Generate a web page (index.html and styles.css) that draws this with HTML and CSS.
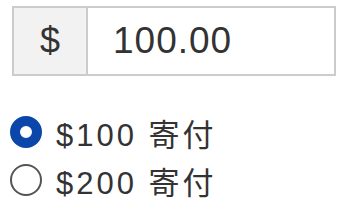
FILE: index.html
```html
<!DOCTYPE html>
<html lang="ja">
<head>
    <meta charset="UTF-8">
    <meta name="viewport" content="width=device-width, initial-scale=1.0">
    <title>寄付</title>
    <link rel="stylesheet" href="styles.css">
</head>
<body>
    <div class="amount">
        <div class="amount-prefix">$</div>
        <div class="amount-value">100.00</div>
    </div>

    <div class="options">
        <label class="option">
            <input type="radio" name="donation" class="radio" checked>
            <span class="option-text">$100 寄付</span>
        </label>
        <label class="option">
            <input type="radio" name="donation" class="radio">
            <span class="option-text">$200 寄付</span>
        </label>
    </div>
</body>
</html>
```

FILE: styles.css
```css
* {
    margin: 0;
    padding: 0;
    box-sizing: border-box;
}

body {
    background: #fff;
    color: #333;
    font-family: 'Liberation Sans', 'Noto Sans CJK JP', sans-serif;
}

.amount {
    display: flex;
    width: 324px;
    height: 70px;
    margin: 6px 0 0 12px;
    border: 2px solid #ccc;
}

.amount-prefix {
    width: 74px;
    background: #f2f2f2;
    border-right: 2px solid #ccc;
    display: flex;
    align-items: center;
    justify-content: center;
    font-size: 36px;
}

.amount-value {
    display: flex;
    align-items: center;
    padding-left: 25px;
    font-size: 37px;
    letter-spacing: 1px;
}

.options {
    margin-top: 32px;
}

.option {
    display: flex;
    align-items: center;
    height: 48px;
    padding-left: 10px;
    gap: 14px;
}

.radio {
    appearance: none;
    width: 32px;
    height: 32px;
    border-radius: 50%;
    border: 2px solid #555;
    background: #fff;
    margin: 0;
}

.radio:checked {
    border: 10px solid #0b47ab;
}

.option-text {
    font-size: 31px;
    letter-spacing: 3px;
}
```
